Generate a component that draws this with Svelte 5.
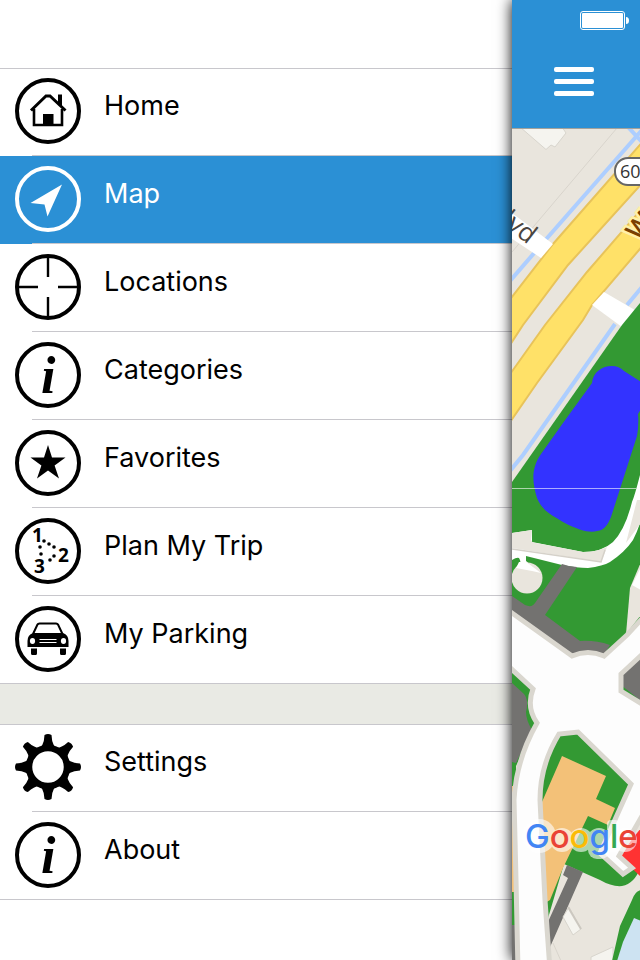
<script>
	const groups = [
		[
			{ icon: 'home', label: 'Home' },
			{ icon: 'map', label: 'Map' },
			{ icon: 'target', label: 'Locations' },
			{ icon: 'info', label: 'Categories' },
			{ icon: 'star', label: 'Favorites' },
			{ icon: 'trip', label: 'Plan My Trip' },
			{ icon: 'car', label: 'My Parking' }
		],
		[
			{ icon: 'gear', label: 'Settings' },
			{ icon: 'info', label: 'About' }
		]
	];
	const teeth = [0, 45, 90, 135, 180, 225, 270, 315];

	let active = $state('Map');
	let open = $state(true);

	function select(e, label) {
		e.preventDefault();
		active = label;
	}
</script>

{#snippet glyph(name)}
	<svg class="icon" viewBox="0 0 66 66" aria-hidden="true">
		{#if name !== 'gear'}
			<circle class="line" cx="33" cy="33" r="31" stroke-width="4" />
		{/if}
		{#if name === 'home'}
			<path class="line" d="M19 31V47H47V31" stroke-width="2.6" />
			<path class="line" d="M16 32.5L31 18H35L50.500 32.500" stroke-width="3" />
			<path d="M43 16.500H47V30L43 26ZM28 36H38.500V47H28Z" />
		{:else if name === 'map'}
			<path d="M47 18.500L15.500 37L29.500 38.500L32.500 50.500Z" />
		{:else if name === 'target'}
			<path class="line" d="M33 4V23M33 43V62M4 33H23M43 33H62" stroke-width="2.4" />
		{:else if name === 'info'}
			<text class="serif" x="26" y="51">i</text>
		{:else if name === 'star'}
			<path d="M33 15L37 27.500H50.500L39.600 35.500L44 48.500L33 40.500L22 48.500L26.400 35.500L15.500 27.500H29Z" />
		{:else if name === 'trip'}
			<text class="digit" x="17" y="24">1</text>
			<text class="digit" x="43" y="44">2</text>
			<text class="digit" x="19" y="55">3</text>
			{#each [[29, 23], [34, 26], [39, 29], [25, 29], [26, 36], [35, 42], [39, 38]] as [x, y]}
				<circle cx={x} cy={y} r="1.8" />
			{/each}
		{:else if name === 'car'}
			<path class="line" d="M18 28L22.500 18.500Q23 17.500 24.500 17.500H41Q42.500 17.500 43 18.500L47.500 28" stroke-width="2" />
			<path d="M18 27H48Q53.500 29 53.500 35V41H12.500V35Q12.500 29 18 27ZM16 42.500H22V47.500Q22 49 20.500 49H17.500Q16 49 16 47.500ZM45 42.500H51V47.500Q51 49 49.500 49H46.500Q45 49 45 47.500Z" />
			<path class="paper" d="M24.500 33H41.500V34H24.500ZM24.500 36H41.500V37H24.500Z" />
			<ellipse class="paper" cx="17.500" cy="35" rx="2.600" ry="3" />
			<ellipse class="paper" cx="48.500" cy="35" rx="2.600" ry="3" />
		{:else}
			<circle class="line" cx="33" cy="33" r="19" stroke-width="6.500" />
			{#each teeth as angle}
				<path transform="rotate({angle} 33 33)" d="M22 15Q29 13.500 29.500 1Q33 -1 36.500 1Q37 13.500 44 15L38 17H28Z" />
			{/each}
		{/if}
	</svg>
{/snippet}

<div class="app">
	{#if open}
		<nav>
			{#each groups as items}
				<ul>
					{#each items as item}
						<li>
							<a
								href="#{item.label}"
								class:active={active === item.label}
								onclick={(e) => select(e, item.label)}
							>
								{@render glyph(item.icon)}
								<span>{item.label}</span>
							</a>
						</li>
					{/each}
				</ul>
			{/each}
		</nav>
	{/if}

	<main>
		<header>
			<svg class="battery" viewBox="0 0 50 20" aria-hidden="true">
				<rect x="0.500" y="0.500" width="44" height="18" rx="2.500" fill="none" stroke="#fff" />
				<rect x="2" y="2" width="41" height="15" rx="1" />
				<path d="M46 6Q49 6 49 9.500T46 13Z" />
			</svg>
			<button aria-label="Menu" onclick={() => (open = !open)}>
				<i></i>
				<i></i>
				<i></i>
			</button>
		</header>

		<svg class="map" viewBox="512 129 128 831" preserveAspectRatio="xMinYMin slice" role="img" aria-label="Map">
			<rect class="land" x="512" y="128" width="128" height="832" />
			<path class="building" d="M520 127L546 149.500L551 145L555 147L566 133L562 127Z" />
			<path d="M617 128L512 252" fill="none" stroke="#d8d4cc" />
			<path class="stream" d="M628 127L642 142M642 130L548 237L510 281" />

			<!-- highway -->
			<path class="highway" d="M645 139L553 244L508 302V348L523 325L568 265L645 180Z" />
			<path class="highway" d="M645 205L587 272L545 325L508 377V425L537 383L583 320L592 305L645 243Z" />
			<path class="road" d="M508 210L553 244L541 258L508 236Z" />
			<path class="road" d="M604 292L640 313L622 327L592 305Z" />
			<path class="stream" d="M642 287L627 305M615 324L523 455L510 471" />
			<text class="street" transform="translate(500 223) rotate(38)">lvd</text>
			<text class="avenue" transform="translate(639 242) rotate(-52)">W</text>
			<rect x="615" y="158" width="44" height="27" rx="13" fill="#fff" stroke="#666" stroke-width="2" />
			<text class="shield" x="620" y="178">60</text>

			<!-- park and lake -->
			<path class="grass" d="M640 303L622 325L512 482V620L572 657L604 657L627 636L640 620Z" />
			<path class="lake" d="M612 366C602 366 593 372 592 383L563 423L541 454C530 470 533 484 537 498C543 512 552 515 563 522C580 531 590 533 597 531C605 530 608 524 611 517L637 436Q639 425 638 414L641 409V382L624 371Q619 366 612 366Z" />
			<path class="road" d="M641 471Q635 495 632 502Q625 530 613 542Q602 552 583 552L532 542V530L512 533V560Q517 557 519 558Q522 563 519 565L524 570H531Q531 564 526 561V556L562 565Q577 568 588 568Q603 566 610 562Q625 552 633 540Q638 530 641 520Z" />
			<path class="land" d="M512 533L532 530L531 540Q532 543 536 543L583 552Q597 552 607 547L601 562L512 548ZM637 500H641V523L626 543Z" />
			<path d="M512 549L601 562L605 550" fill="none" stroke="#d5d1c9" stroke-width="1.500" />
			<path class="land" d="M641 562L630 588L626 634L641 615Z" />
			<path class="road" d="M641 567L632 585L641 590Z" />
			<circle class="land" cx="527" cy="578" r="15.500" />
			<path class="road" d="M516 568L519 562L526 562L529 564L541 573L532 571Z" />
			<path class="lot" d="M562 564Q570 567 577 567L545 615L580 641Q595 640 610 645L603 656H572L512 612V596L525 605Q532 608 535 603Z" />

			<!-- blocks around the crossing -->
			<path class="grass" d="M512 671L536 690L532 707L537 724L516 766V790H512ZM512 892H518L520 925H512Z" />
			<path class="lot" d="M512 683L524 694Q529 700 526 712Q526 720 532 730L516 763L512 762ZM512 925H520V960H512Z" />
			<path class="sand" d="M512 786H517V892H512Z" />
			<path class="lot" d="M641 655L622 674V690L641 704Z" />
			<path class="grass" d="M621 685L641 701V712L619 692Z" />
			<path class="grass" d="M558 732H578L632 783L605 855L641 865Q636 883 622 886Q612 887 600 880L564 864L546 925L538 790Z" />
			<path class="sand" d="M562 756L606 776L596 799L615 808L608 825L588 816L563 868L550 900L545 903L538 830L542 802Z" />
			<path class="lot" d="M567 865L583 872L547 954V924L568 878L563 875Z" />
			<path class="building" d="M569 907L581 929L573 935L563 917ZM591 957L613 947V961H591Z" />
			<path d="M568 907L581 929" fill="none" stroke="#ccc8c0" stroke-width="2" />
			<path d="M553 943L561 961" fill="none" stroke="#d8d4cc" />
			<path class="grass" d="M641 890Q635 891 632 900L620 926L612 961H641Z" />
			<path d="M634 918L641 921V961H617L623 942Z" fill="#cde3f2" />
			<path d="M641 828L619 856L641 877Z" fill="#ff3232" />
			<path class="plaza" d="M505 608L572 656Q588 649 604 656L627 635L650 610V647L621 674V691L650 709V802L619 856L632 868L623 874L600 853L631 784L578 732L559 734Q540 765 540 800L545 900L550 970H518L516 880L514 800Q516 760 537 723Q526 707 533 689L505 663Z" />
			<path d="M512 488.500H636" stroke="#fff" stroke-opacity="0.600" />

			<g fill="#fff" opacity="0.600">
				<circle cx="539" cy="836" r="17" />
				<circle cx="562" cy="840" r="12" />
				<circle cx="581" cy="840" r="12" />
				<circle cx="599" cy="840" r="12" />
				<rect x="588" y="838" width="22" height="21" rx="9" />
				<rect x="607" y="820" width="12" height="32" rx="4" />
				<circle cx="625" cy="840" r="12" />
			</g>
			<text class="google" x="525" y="848"><tspan fill="#4285f4">G</tspan><tspan fill="#ea4335">o</tspan><tspan fill="#fbbc05">o</tspan><tspan fill="#4285f4">g</tspan><tspan fill="#34a853">l</tspan><tspan fill="#ea4335">e</tspan></text>
		</svg>
	</main>
</div>

<style>
	:global(body) {
		background: #fff;
		font-family: Inter, 'Liberation Sans', sans-serif;
	}

	.app {
		display: flex;
		height: 100vh;
		overflow: hidden;
	}

	nav {
		flex: 0 0 80%;
		padding-top: 68px;
		box-sizing: border-box;
	}
	ul {
		margin: 0;
		padding: 0;
		list-style: none;
		box-shadow: inset 0 1px #c8c7cc;
	}
	ul + ul {
		border-top: 40px solid #e9eae4;
	}
	a {
		display: flex;
		align-items: flex-start;
		gap: 23px;
		height: 88px;
		padding: 10px 15px;
		box-sizing: border-box;
		background: linear-gradient(#c8c7cc, #c8c7cc) 32px 100% / 100% 1px no-repeat;
		color: #000;
		font-size: 27px;
		line-height: 56px;
		text-decoration: none;
	}
	li:last-child a {
		background-position: 0 100%;
	}
	a.active {
		background-color: #2b90d5;
		color: #fff;
	}

	.icon {
		flex: none;
		width: 66px;
		height: 66px;
		fill: currentColor;
	}
	.line {
		fill: none;
		stroke: currentColor;
	}
	.paper {
		fill: #fff;
	}
	.serif {
		font: italic bold 52px 'Liberation Serif', serif;
	}
	.digit {
		font: bold 19px 'Open Sans', sans-serif;
	}

	main {
		position: relative;
		flex: 1;
		min-width: 0;
		display: flex;
		flex-direction: column;
		box-shadow: 0 0 14px #000;
	}
	header {
		flex: none;
		display: flex;
		flex-direction: column;
		justify-content: space-between;
		height: 129px;
		padding: 11px 10px 20px 30px;
		box-sizing: border-box;
		border-bottom: 1px solid #a3a29c;
		background: #2b90d5;
	}
	.battery {
		align-self: flex-end;
		width: 50px;
		height: 20px;
		fill: #fff;
	}
	button {
		display: flex;
		flex-direction: column;
		gap: 7px;
		width: 64px;
		padding: 12px;
		border: 0;
		background: none;
		cursor: pointer;
	}
	button i {
		height: 5px;
		border-radius: 2px;
		background: #fff;
	}

	.map {
		flex: 1;
		min-height: 0;
		width: 100%;
	}
	.land {
		fill: #e9e5dd;
	}
	.building {
		fill: #f5f4ef;
		stroke: #d8d5cd;
	}
	.stream {
		fill: none;
		stroke: #adceff;
		stroke-width: 4;
	}
	.highway {
		fill: #ffe168;
		stroke: #e8c35a;
		stroke-width: 2;
	}
	.road {
		fill: #fff;
	}
	.grass {
		fill: #339933;
	}
	.lake {
		fill: #3333ff;
	}
	.lot {
		fill: #737270;
	}
	.sand {
		fill: #f3c178;
	}
	.plaza {
		fill: #fdfdfd;
		stroke: #dad7cf;
		stroke-width: 5;
	}
	.street {
		font: 26px 'Open Sans', sans-serif;
		fill: #4a4540;
	}
	.avenue {
		font: 600 27px 'Open Sans', sans-serif;
		fill: #7a4000;
		stroke: #fff0a8;
		stroke-width: 5;
		paint-order: stroke;
	}
	.shield {
		font: 18px 'Open Sans', sans-serif;
		fill: #333;
	}
	.google {
		font: 500 33px Inter, sans-serif;
	}
</style>
